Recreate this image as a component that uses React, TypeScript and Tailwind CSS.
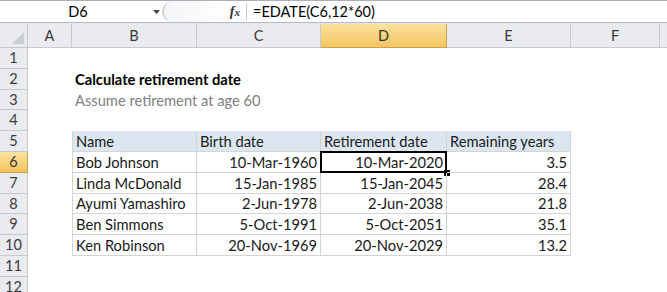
import React from 'react';

interface Col {
    key: string;
    w: string;
}

const cols: Col[] = [
    { key: 'A', w: 'w-[44px]' },
    { key: 'B', w: 'w-[125px]' },
    { key: 'C', w: 'w-[124px]' },
    { key: 'D', w: 'w-[126px]' },
    { key: 'E', w: 'w-[124px]' },
    { key: 'F', w: 'w-[89px]' },
    { key: '', w: 'w-[40px]' },
];

const people = [
    ['Bob Johnson', '10-Mar-1960', '10-Mar-2020', '3.5'],
    ['Linda McDonald', '15-Jan-1985', '15-Jan-2045', '28.4'],
    ['Ayumi Yamashiro', '2-Jun-1978', '2-Jun-2038', '21.8'],
    ['Ben Simmons', '5-Oct-1991', '5-Oct-2051', '35.1'],
    ['Ken Robinson', '20-Nov-1969', '20-Nov-2029', '13.2'],
];

const headers = ['Name', 'Birth date', 'Retirement date', 'Remaining years'];

const RowHeader: React.FC<{ n: number }> = ({ n }) => (
    <div
        className={
            'w-[28px] shrink-0 flex items-center justify-center border-r border-b text-[14.5px] ' +
            (n === 6
                ? 'bg-gradient-to-b from-[#fbe39e] to-[#f3c45f] border-[#c9a24a] text-[#333]'
                : 'bg-[#e9ebee] border-[#c6cacf] text-[#3b3b3b]')
        }
    >
        {n}
    </div>
);

const Cell: React.FC<{ row: number; col: number }> = ({ row, col }) => {
    const w = cols[col].w;
    // table area: rows 5..10, columns B..E
    const inTable = row >= 5 && row <= 10 && col >= 1 && col <= 4;
    if (inTable) {
        const isHead = row === 5;
        const text = isHead ? headers[col - 1] : people[row - 6][col - 1];
        const right = !isHead && col > 1;
        const active = row === 6 && col === 3;
        return (
            <div
                className={
                    w +
                    ' shrink-0 relative flex items-center whitespace-nowrap border-r border-b border-[#d4d4d4] px-[3px] ' +
                    (col === 1 ? 'border-l ' : '') +
                    (isHead ? 'bg-[#dce6f1] ' : '') +
                    (right ? 'justify-end' : 'justify-start')
                }
            >
                {text}
                {active && (
                    <>
                        <div className="absolute -left-px -top-px -right-px -bottom-px border-2 border-black" />
                        <div className="absolute -right-[4px] -bottom-[4px] w-[6px] h-[6px] bg-black" />
                    </>
                )}
            </div>
        );
    }
    let content: React.ReactNode = null;
    if (col === 1 && row === 2) content = <span className="font-bold text-black">Calculate retirement date</span>;
    if (col === 1 && row === 3) content = <span className="text-[#808080]">Assume retirement at age 60</span>;
    return (
        <div className={w + ' shrink-0 flex items-center whitespace-nowrap overflow-visible px-[3px]'}>
            {content}
        </div>
    );
};

const App: React.FC = () => {
    const rows = Array.from({ length: 12 }, (_, i) => i + 1);
    return (
        <div className="w-[667px] h-[292px] overflow-hidden bg-white font-['Lato',sans-serif] text-[14.7px] text-[#1a1a1a]">
            {/* formula bar */}
            <div className="h-[23px] flex items-stretch border-t border-[#a9b0b8] border-b border-b-[#b6bcc4] bg-white">
                <div className="w-[150px] flex items-center justify-center pl-[6px] text-[14.5px] text-black">D6</div>
                <div className="w-[12px] flex items-center justify-center">
                    <svg width="7" height="4" viewBox="0 0 7 4">
                        <path d="M0 0h7L3.5 4z" fill="#444" />
                    </svg>
                </div>
                <div className="flex-none w-[84px] flex items-center">
                    <div className="h-[21px] w-[66px] rounded-l-full border-l-2 border-[#cfd3d8] bg-gradient-to-r from-[#f4f5f7] to-white" />
                    <span className="ml-auto mr-[6px] font-['Liberation_Serif',serif] italic font-bold text-[14px] text-[#333]">
                        f<span className="text-[11px]">x</span>
                    </span>
                </div>
                <div className="w-px bg-[#c6cacf] my-[2px]" />
                <div className="flex items-center pl-[6px] text-[14.5px] text-black">=EDATE(C6,12*60)</div>
            </div>
            <div className="h-[1px] bg-[#e3e6ea]" />
            {/* column headers */}
            <div className="h-[24px] flex">
                <div className="w-[28px] shrink-0 relative bg-[#e9ebee] border-r border-b border-[#c6cacf]">
                    <svg className="absolute right-[3px] bottom-[3px]" width="12" height="12" viewBox="0 0 12 12">
                        <path d="M12 0V12H0z" fill="#c9ccd1" />
                    </svg>
                </div>
                {cols.map((c, i) => (
                    <div
                        key={i}
                        className={
                            c.w +
                            ' shrink-0 flex items-center justify-center border-r border-b text-[14.5px] ' +
                            (c.key === 'D'
                                ? 'bg-gradient-to-b from-[#fbe39e] to-[#f3c45f] border-[#c9a24a] text-[#333]'
                                : 'bg-[#e9ebee] border-[#c6cacf] text-[#3b3b3b]')
                        }
                    >
                        {c.key}
                    </div>
                ))}
            </div>
            {rows.map((r) => (
                <div key={r} className="h-[20.8px] flex">
                    <RowHeader n={r} />
                    {cols.map((c, ci) => (
                        <Cell key={ci} row={r} col={ci} />
                    ))}
                </div>
            ))}
        </div>
    );
};

export default App;
